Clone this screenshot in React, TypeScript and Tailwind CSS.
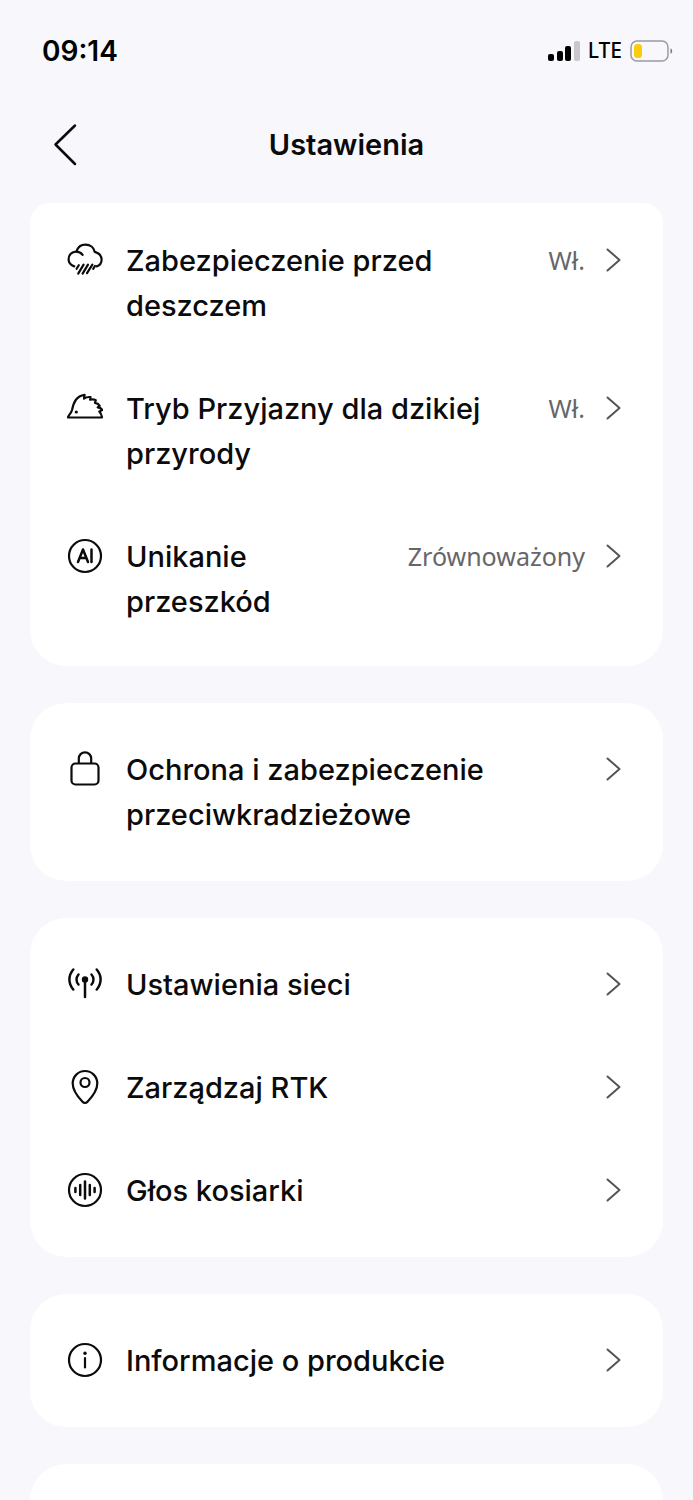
import type { ReactNode } from "react";

function Icon({ children }: { children: ReactNode }) {
  return (
    <svg
      className="mt-1 h-9 w-9 shrink-0"
      viewBox="0 0 36 36"
      fill="none"
      stroke="#0b0b0c"
      strokeWidth="2.2"
      strokeLinecap="round"
      strokeLinejoin="round"
      aria-hidden="true"
    >
      {children}
    </svg>
  );
}

const icons = {
  rain: (
    <Icon>
      <path d="M7.2 24.4C3.6 23 1.600 20.500 1.600 17.200c0-4.300 3.300-7.600 7.400-7.600 2.800 0 5.200 1.200 6.600 3.200" />
      <path d="M9.600 9.300C10.800 5.400 14.200 2.600 18.400 2.600c4.700 0 8.500 3 9.400 7.300 4 1.200 6.800 4.200 6.800 7.900 0 3.300-1.700 5.600-4.900 6.600" />
      <path d="M11.800 23.200l-2.200 3.600M16.600 22.600l-5.400 9M21 22.600l-5.400 9M25.400 22.600L20 31.200M28 24l-1.800 2.800" />
    </Icon>
  ),
  hedgehog: (
    <Icon>
      <path d="M1 27.500c.3-2.700 3-3.500 4-7.500C6.600 12.600 9.200 5.800 17.600 4.800L17 8.600c2-1.300 4.200-1.800 6.500-1.500l-.4 2.600c2.100-.7 4-.5 5.700.4l-.8 2.800c2 .2 3.600 1.200 4.700 3l-2 1.400c2.400.2 3.900 1.100 4.700 2.800l-3.100 1.400c1.600 1.700 2.400 3.500 2.700 6z" />
      <circle cx="9.300" cy="22" r="1.600" fill="#0b0b0c" stroke="none" />
    </Icon>
  ),
  ai: (
    <Icon>
      <circle cx="18" cy="18" r="16" />
      <path strokeWidth="2.500" d="M11 24l5-12.500L21 24M12.800 20h6.500M24.500 11.500V24" />
    </Icon>
  ),
  lock: (
    <Icon>
      <rect x="4.500" y="12.500" width="27" height="21" rx="4" />
      <path d="M11.800 12V7.500a6.200 6.200 0 0 1 12.400 0V12" />
    </Icon>
  ),
  antenna: (
    <Icon>
      <circle cx="18" cy="13.500" r="3.200" fill="#0b0b0c" stroke="none" />
      <path
        strokeWidth="2.500"
        d="M18 14v17M11.500 8.500c-2.600 3-2.600 7 0 10M24.500 8.500c2.600 3 2.600 7 0 10M6.300 3.500c-5.200 6-5.200 14 0 20M29.700 3.500c5.200 6 5.200 14 0 20"
      />
    </Icon>
  ),
  pin: (
    <Icon>
      <path d="M18 34c-1 0-1.800-.4-2.500-1.200C9.500 26.500 5.700 20.500 5.700 14.500 5.700 7.500 11.200 2 18 2s12.300 5.500 12.300 12.500c0 6-3.800 12-9.800 18.300-.7.8-1.500 1.200-2.500 1.200z" />
      <circle cx="18" cy="13.500" r="4.500" />
    </Icon>
  ),
  voice: (
    <Icon>
      <circle cx="18" cy="18" r="16" />
      <path strokeWidth="2.500" d="M8.400 16v4M13.200 13v10M18 9.500v17M22.800 13v10M27.600 16v4" />
    </Icon>
  ),
  info: (
    <Icon>
      <circle cx="18" cy="18" r="16" />
      <path d="M18 16v9.500" />
      <circle cx="18" cy="11.300" r="1.700" fill="#0b0b0c" stroke="none" />
    </Icon>
  ),
};

function Chevron() {
  return (
    <svg
      className="mt-2.5 h-6 w-4 shrink-0"
      viewBox="0 0 16 24"
      fill="none"
      stroke="#555558"
      strokeWidth="2"
      strokeLinecap="round"
      strokeLinejoin="round"
      aria-hidden="true"
    >
      <path d="M2.500 1.500L14.500 12l-12 10.500" />
    </svg>
  );
}

function Row({ icon, label, value }: { icon: ReactNode; label: string; value?: string }) {
  return (
    <button type="button" className="flex w-full items-start text-left">
      {icon}
      <span className="ml-[23px] min-w-0 flex-1 text-[29px] leading-[45px] font-medium text-[#0b0b0c]">
        {label}
      </span>
      {value && (
        <span className="ml-6 shrink-0 font-['Noto_Sans',sans-serif] text-[25px] leading-[45px] text-[#66666a]">
          {value}
        </span>
      )}
      <span className="ml-5 flex">
        <Chevron />
      </span>
    </button>
  );
}

function Card({ first, children }: { first?: boolean; children: ReactNode }) {
  return (
    <section
      className={`flex flex-col gap-[58px] bg-white pr-[42px] pl-[37px] ${
        first ? "rounded-t-[20px] rounded-b-[36px] pt-[35px] pb-[42px]" : "rounded-[36px] py-11"
      }`}
    >
      {children}
    </section>
  );
}

function StatusBar() {
  return (
    <div className="flex h-[100px] items-center justify-between pt-0.5 pr-5 pl-[42px] text-black">
      <span className="text-[28px] font-semibold">09:14</span>
      <div className="flex items-center gap-2">
        <svg className="h-5 w-8" viewBox="0 0 32 20" aria-hidden="true">
          <rect x="0" y="13" width="6" height="7" rx="2" />
          <rect x="9" y="10" width="6" height="10" rx="2" />
          <rect x="17" y="5" width="6" height="15" rx="2" />
          <rect x="26" y="0" width="6" height="20" rx="2" fill="#c8c8cc" />
        </svg>
        <span className="font-['Noto_Sans',sans-serif] text-[21px] font-medium">LTE</span>
        <svg className="h-[22px] w-[43px]" viewBox="0 0 43 22" aria-hidden="true">
          <rect x="1" y="1" width="37" height="20" rx="6" fill="none" stroke="#9b9ba0" strokeWidth="1.500" />
          <rect x="4" y="4" width="8" height="14" rx="3.500" fill="#fccb0a" />
          <path d="M40.500 8.200c2.200 1 2.200 4.600 0 5.600z" fill="#77777c" />
        </svg>
      </div>
    </div>
  );
}

export default function App() {
  return (
    <div className="flex min-h-screen flex-col bg-[#f7f7fc] font-['Inter',sans-serif]">
      <StatusBar />

      <header className="grid h-[90px] grid-cols-[1fr_auto_1fr] items-center px-[50px]">
        <button type="button" aria-label="Wstecz" className="justify-self-start">
          <svg
            className="h-11 w-8"
            viewBox="0 0 32 44"
            fill="none"
            stroke="#0b0b0c"
            strokeWidth="2.500"
            strokeLinecap="round"
            strokeLinejoin="round"
            aria-hidden="true"
          >
            <path d="M25 2.500L5.500 21.500 25 41" />
          </svg>
        </button>
        <h1 className="text-[29px] font-semibold text-[#0b0b0c]">Ustawienia</h1>
      </header>

      <main className="flex flex-1 flex-col gap-[37px] px-[30px] pt-[13px]">
        <Card first>
          <Row icon={icons.rain} label="Zabezpieczenie przed deszczem" value="Wł." />
          <Row icon={icons.hedgehog} label="Tryb Przyjazny dla dzikiej przyrody" value="Wł." />
          <Row icon={icons.ai} label="Unikanie przeszkód" value="Zrównoważony" />
        </Card>

        <Card>
          <Row icon={icons.lock} label="Ochrona i zabezpieczenie przeciwkradzieżowe" />
        </Card>

        <Card>
          <Row icon={icons.antenna} label="Ustawienia sieci" />
          <Row icon={icons.pin} label="Zarządzaj RTK" />
          <Row icon={icons.voice} label="Głos kosiarki" />
        </Card>

        <Card>
          <Row icon={icons.info} label="Informacje o produkcie" />
        </Card>

        <section className="min-h-8 flex-1 rounded-t-[36px] bg-white" />
      </main>
    </div>
  );
}
